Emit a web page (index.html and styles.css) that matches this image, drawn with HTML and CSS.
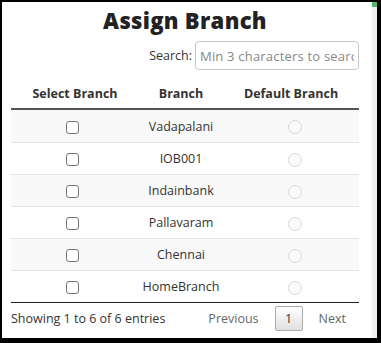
FILE: index.html
```html
<!DOCTYPE html>
<html>
<head>
<meta charset="utf-8">
<link rel="stylesheet" href="styles.css">
</head>
<body>
<div class="window">
  <div class="content">
    <h1 class="title">Assign Branch</h1>
    <div class="search">
      <label class="search-label">Search:</label>
      <input class="search-input" type="text" placeholder="Min 3 characters to search">
    </div>
    <table class="grid">
      <thead>
        <tr>
          <th class="c1">Select Branch</th>
          <th class="c2">Branch</th>
          <th class="c3">Default Branch</th>
        </tr>
      </thead>
      <tbody>
        <tr class="odd"><td><span class="cb"></span></td><td>Vadapalani</td><td><span class="rd"></span></td></tr>
        <tr><td><span class="cb"></span></td><td>IOB001</td><td><span class="rd"></span></td></tr>
        <tr class="odd"><td><span class="cb"></span></td><td>Indainbank</td><td><span class="rd"></span></td></tr>
        <tr><td><span class="cb"></span></td><td>Pallavaram</td><td><span class="rd"></span></td></tr>
        <tr class="odd"><td><span class="cb"></span></td><td>Chennai</td><td><span class="rd"></span></td></tr>
        <tr><td><span class="cb"></span></td><td>HomeBranch</td><td><span class="rd"></span></td></tr>
      </tbody>
    </table>
    <div class="footer">
      <div class="info">Showing 1 to 6 of 6 entries</div>
      <div class="pager">
        <span class="pg-link">Previous</span>
        <span class="pg-current">1</span>
        <span class="pg-link">Next</span>
      </div>
    </div>
  </div>
  <div class="scrollbar"><div class="thumb"></div></div>
</div>
</body>
</html>
```
FILE: styles.css
```css
html, body {
  margin: 0;
  padding: 0;
}
body {
  width: 381px;
  height: 343px;
  overflow: hidden;
  font-family: "Open Sans", "DejaVu Sans", sans-serif;
  color: #333;
}
.window {
  display: flex;
  box-sizing: border-box;
  width: 381px;
  height: 343px;
  background: #000;
  padding: 2px 4px 5px 2px;
}
.content {
  flex: 1;
  background: #fff;
  padding: 0 13px 0 9px;
  display: flex;
  flex-direction: column;
}
.scrollbar {
  width: 5px;
  background: #f1f1f1;
}
.thumb {
  height: 5px;
  background: #4cb86a;
}
.title {
  margin: 0;
  padding-top: 3px;
  height: 36px;
  box-sizing: border-box;
  text-align: center;
  font-size: 22px;
  font-weight: 800;
  color: #222;
  line-height: 30px;
  letter-spacing: 0.3px;
}
.search {
  display: flex;
  justify-content: flex-end;
  align-items: center;
  gap: 3px;
  margin-top: 3px;
  height: 29px;
}
.search-label {
  font-size: 12.5px;
  color: #333;
}
.search-input {
  box-sizing: border-box;
  width: 164px;
  height: 29px;
  border: 1px solid #c8c8c8;
  border-radius: 4px;
  padding: 0 4px;
  font-family: "Open Sans", sans-serif;
  font-size: 13px;
  letter-spacing: 0.2px;
  color: #777;
}
.search-input::placeholder {
  color: #888;
}
.grid {
  margin-top: 8px;
  width: 348px;
  border-collapse: collapse;
  font-size: 12.5px;
}
.grid th {
  height: 30px;
  padding: 0;
  font-weight: 700;
  font-size: 12.5px;
  color: #333;
  text-align: center;
  border-bottom: 2px solid #555;
}
.c1 { width: 128px; }
.c2 { width: 84px; }
.c3 { width: 136px; }
.grid td {
  height: 31px;
  padding: 0;
  text-align: center;
  border-top: 1px solid #e4e4e4;
  color: #333;
}
.grid tbody tr:first-child td {
  border-top: none;
  height: 32px;
}
.grid tbody tr:last-child td {
  border-bottom: 1px solid #222;
}
.grid tr.odd td {
  background: #f9f9f9;
}
.cb {
  display: inline-block;
  width: 11px;
  height: 11px;
  border: 1px solid #767676;
  border-radius: 3px;
  background: #fff;
  vertical-align: middle;
  margin-right: 6px;
}
.rd {
  display: inline-block;
  width: 12px;
  height: 12px;
  border: 1px solid #d8d8d8;
  border-radius: 50%;
  background: #fafafa;
  vertical-align: middle;
  margin-left: 8px;
}
.footer {
  display: flex;
  align-items: center;
  justify-content: space-between;
  height: 30px;
  font-size: 12.5px;
}
.info {
  color: #333;
}
.pager {
  display: flex;
  align-items: center;
  gap: 16px;
  padding-right: 13px;
}
.pg-link {
  color: #666;
}
.pg-current {
  box-sizing: border-box;
  width: 28px;
  height: 25px;
  display: flex;
  align-items: center;
  justify-content: center;
  border: 1px solid #aaa;
  border-radius: 2px;
  background: linear-gradient(#fff, #e0e0e0);
  color: #333;
}
```
